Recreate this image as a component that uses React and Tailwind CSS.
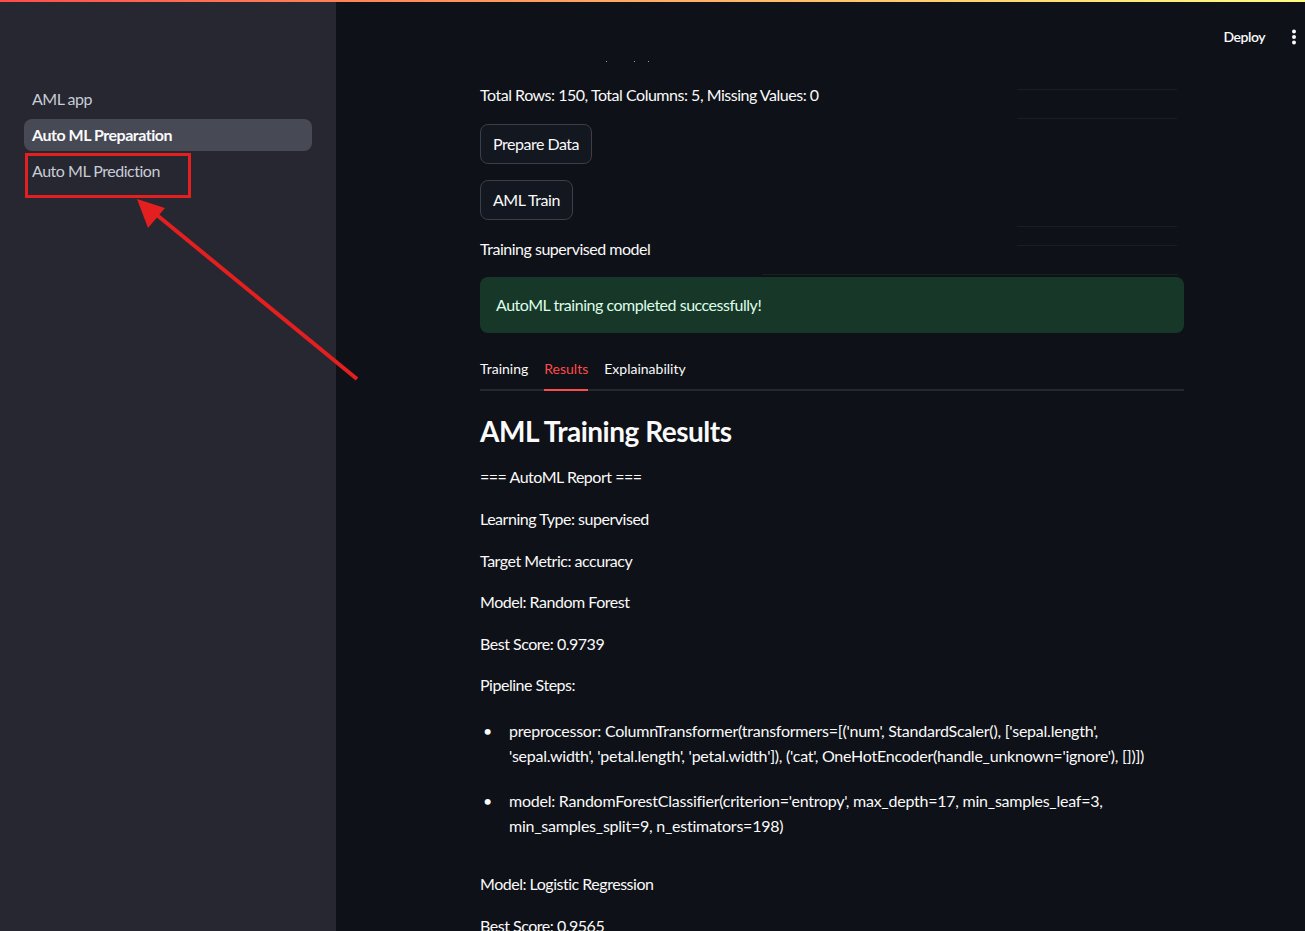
import React from 'react';

// 사이드바 메뉴 항목
const NAV_ITEMS = [
  { label: 'AML app', active: false },
  { label: 'Auto ML Preparation', active: true },
  { label: 'Auto ML Prediction', active: false },
];

const REPORT_LINES = [
  '=== AutoML Report ===',
  'Learning Type: supervised',
  'Target Metric: accuracy',
  'Model: Random Forest',
  'Best Score: 0.9739',
  'Pipeline Steps:',
];

const PIPELINE_STEPS = [
  "preprocessor: ColumnTransformer(transformers=[('num', StandardScaler(), ['sepal.length', 'sepal.width', 'petal.length', 'petal.width']), ('cat', OneHotEncoder(handle_unknown='ignore'), [])])",
  "model: RandomForestClassifier(criterion='entropy', max_depth=17, min_samples_leaf=3, min_samples_split=9, n_estimators=198)",
];

const FONT = { fontFamily: 'Lato, "Noto Sans", sans-serif' };

const Sidebar = () => (
  <aside className="relative w-[336px] shrink-0 bg-[#262730] h-[931px]">
    <nav className="flex flex-col gap-1 px-6 pt-[83px]">
      {NAV_ITEMS.map(item => (
        <div
          key={item.label}
          className={`h-8 flex items-center px-2 rounded-lg text-base ${
            item.active ? 'bg-[#474955] font-bold text-[#fafafa]' : 'text-[#c8ccd6]'
          }`}
        >
          {item.label}
        </div>
      ))}
    </nav>

    {/* 빨간 표시 박스 + 화살표 */}
    <div className="absolute left-[25px] top-[153px] w-[166px] h-[45px] border-[3px] border-[#e41f1f]" />
    <svg className="absolute left-0 top-0 pointer-events-none" width="400" height="400" viewBox="0 0 400 400">
      <line x1="357" y1="379" x2="152" y2="211" stroke="#e41f1f" strokeWidth="4" />
      <polygon points="137,199 165,208 148,228" fill="#e41f1f" />
    </svg>
  </aside>
);

const Header = () => (
  <div className="absolute right-0 top-0 h-[74px] flex items-center pr-2 gap-[26px] z-10">
    <span className="text-sm font-semibold text-[#fafafa]">Deploy</span>
    <svg width="6" height="16" viewBox="0 0 6 16">
      <circle cx="3" cy="2.5" r="2" fill="#fafafa" />
      <circle cx="3" cy="8" r="2" fill="#fafafa" />
      <circle cx="3" cy="13.5" r="2" fill="#fafafa" />
    </svg>
  </div>
);

const Button = ({ children }) => (
  <button className="h-10 px-3 rounded-lg border border-[#3c3f47] bg-[#131720] text-base text-[#fafafa]">
    {children}
  </button>
);

const Tabs = () => (
  <div className="mt-4 flex gap-4 h-[42px] border-b-2 border-[#262730] tracking-normal">
    {['Training', 'Results', 'Explainability'].map((t, i) => (
      <div
        key={t}
        className={`flex items-center text-sm -mb-[2px] border-b-2 ${
          i === 1 ? 'text-[#ff4b4b] border-[#ff4b4b]' : 'text-[#fafafa] border-transparent'
        }`}
      >
        {t}
      </div>
    ))}
  </div>
);

export default function App() {
  return (
    <div className="relative flex w-[1305px] h-[931px] overflow-hidden bg-[#0e1117] text-[#fafafa] tracking-[-0.03em]" style={FONT}>
      {/* 상단 장식 라인 */}
      <div className="absolute left-0 top-0 w-full h-[2px] bg-gradient-to-r from-[#ff4b4b] to-[#fffd80] z-20" />

      <Sidebar />

      <main className="relative flex-1">
        <Header />

        {/* 스크롤 잔상 라인 */}
        <div className="absolute left-[681px] top-[89px] w-[160px] h-px bg-[#18201d]" />
        <div className="absolute left-[681px] top-[118px] w-[160px] h-px bg-[#18201d]" />
        <div className="absolute left-[681px] top-[226px] w-[160px] h-px bg-[#18201d]" />
        <div className="absolute left-[681px] top-[245px] w-[160px] h-px bg-[#18201d]" />
        <div className="absolute left-[426px] top-[274px] w-[416px] h-px bg-[#18201d]" />
        <div className="absolute left-[270px] top-[61px] w-px h-px bg-[#9a9ca0]" />
        <div className="absolute left-[298px] top-[61px] w-px h-px bg-[#9a9ca0]" />
        <div className="absolute left-[312px] top-[61px] w-px h-px bg-[#9a9ca0]" />

        <div className="w-[704px] ml-[144px] pt-[82px] text-base leading-[25.6px]">
          <p>Total Rows: 150, Total Columns: 5, Missing Values: 0</p>

          <div className="mt-4 flex flex-col items-start gap-4">
            <Button>Prepare Data</Button>
            <Button>AML Train</Button>
          </div>

          <p className="mt-4">Training supervised model</p>

          <div className="mt-4 rounded-lg bg-[#173828] text-[#dffde9] px-4 py-[15px]">
            AutoML training completed successfully!
          </div>

          <Tabs />

          <h3 className="mt-6 text-[28px] font-bold leading-[33.6px] mb-4">AML Training Results</h3>

          {REPORT_LINES.map(line => (
            <p key={line} className="mb-4">{line}</p>
          ))}

          <ul className="mb-[17px] tracking-[-0.015em] leading-[25px]">
            {PIPELINE_STEPS.map(step => (
              <li key={step} className="flex pt-1 pb-4">
                <span className="w-[29px] shrink-0 pl-[3px]">•</span>
                <span>{step}</span>
              </li>
            ))}
          </ul>

          <p className="mb-4">Model: Logistic Regression</p>
          <p className="mb-4">Best Score: 0.9565</p>
        </div>
      </main>
    </div>
  );
}
